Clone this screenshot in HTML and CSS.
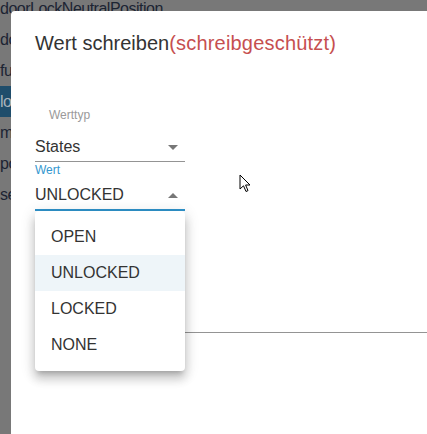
FILE: index.html
```html
<!DOCTYPE html>
<html lang="de">
<head>
<meta charset="utf-8">
<title>Wert schreiben</title>
<link rel="stylesheet" href="styles.css">
</head>
<body>
<div class="bg-list">
  <div class="bg-row">doorLockNeutralPosition</div>
  <div class="bg-row">doorLockState</div>
  <div class="bg-row">function</div>
  <div class="bg-row bg-row-active">lockState</div>
  <div class="bg-row">mode</div>
  <div class="bg-row">position</div>
  <div class="bg-row">setValue</div>
</div>

<div class="overlay">
  <div class="dialog">
    <h2 class="dialog-title">Wert schreiben<span class="readonly">(schreibgeschützt)</span></h2>
    <div class="dialog-content">
      <div class="field">
        <div class="label label-small">Werttyp</div>
        <div class="select">
          <span class="select-value">States</span>
          <svg class="arrow" viewBox="0 0 24 24" width="24" height="24"><path d="M7 10l5 5 5-5z"/></svg>
        </div>
      </div>
      <div class="field field-open">
        <div class="label label-focus">Wert</div>
        <div class="select select-focus">
          <span class="select-value">UNLOCKED</span>
          <svg class="arrow arrow-up" viewBox="0 0 24 24" width="24" height="24"><path d="M7 10l5 5 5-5z"/></svg>
        </div>
        <ul class="menu">
          <li class="menu-item">OPEN</li>
          <li class="menu-item menu-item-selected">UNLOCKED</li>
          <li class="menu-item">LOCKED</li>
          <li class="menu-item">NONE</li>
        </ul>
      </div>
      <div class="field-hidden"></div>
    </div>
  </div>
  <svg class="cursor" viewBox="0 0 13 20" width="13" height="20"><path d="M1 1 L1 15 L4.5 11.8 L7 17.5 L9 16.6 L6.6 11 L11 11 Z" fill="#fff" stroke="#000" stroke-width="1" stroke-linejoin="round"/></svg>
</div>
</body>
</html>
```

FILE: styles.css
```css
* { box-sizing: border-box; }
html, body { margin: 0; padding: 0; }
body {
  width: 427px;
  height: 434px;
  overflow: hidden;
  background: #787878;
  font-family: "Liberation Sans", Arial, sans-serif;
  position: relative;
}
.bg-list {
  margin-top: -7px;
}
.bg-row {
  height: 31px;
  line-height: 31px;
  font-size: 16px;
  letter-spacing: -0.5px;
  color: #1c2433;
  white-space: nowrap;
}
.bg-row-active {
  background: #1f4d6b;
  color: #a9b3bb;
}
.overlay {
  position: absolute;
  inset: 0;
  padding: 11px 0 0 11px;
  overflow: hidden;
}
.dialog {
  width: 416px;
  height: 423px;
  background: #fff;
  border-radius: 4px 0 0 0;
}
.dialog-title {
  margin: 0;
  padding: 16px 24px;
  font-size: 20px;
  line-height: 32px;
  font-weight: normal;
  color: #333;
  white-space: nowrap;
}
.readonly { color: #c64f50; letter-spacing: 0.2px; }
.dialog-content {
  padding: 33px 24px 0 24px;
}
.field { position: relative; width: 150px; }
.label {
  font-size: 12px;
  line-height: 14px;
}
.label-small {
  color: #9a9a9a;
  margin-left: 14px;
  margin-bottom: 15px;
}
.label-focus {
  color: #3498cf;
  margin-top: 1px;
  margin-bottom: 8px;
}
.select {
  position: relative;
  font-size: 16px;
  line-height: 19px;
  color: #333;
  padding-bottom: 5px;
  border-bottom: 1px solid #949494;
}
.select-focus {
  border-bottom: 2px solid #2f93cb;
}
.arrow {
  position: absolute;
  right: 0;
  top: -2px;
  fill: #777;
}
.arrow-up {
  transform: rotate(180deg);
  top: -1px;
}
.menu {
  position: absolute;
  left: 0;
  top: 100%;
  width: 150px;
  margin: 0;
  padding: 8px 0;
  list-style: none;
  background: #fff;
  border-radius: 4px;
  box-shadow: 0 5px 5px -3px rgba(0,0,0,.2), 0 8px 10px 1px rgba(0,0,0,.14), 0 3px 14px 2px rgba(0,0,0,.12);
  z-index: 2;
}
.menu-item {
  height: 36px;
  line-height: 36px;
  padding-left: 16px;
  font-size: 16px;
  color: #333;
}
.menu-item-selected { background: #eef5f9; }
.field-hidden {
  height: 122px;
  border-bottom: 1px solid #949494;
  margin-right: -24px;
}
.cursor {
  position: absolute;
  left: 239px;
  top: 174px;
}
```
